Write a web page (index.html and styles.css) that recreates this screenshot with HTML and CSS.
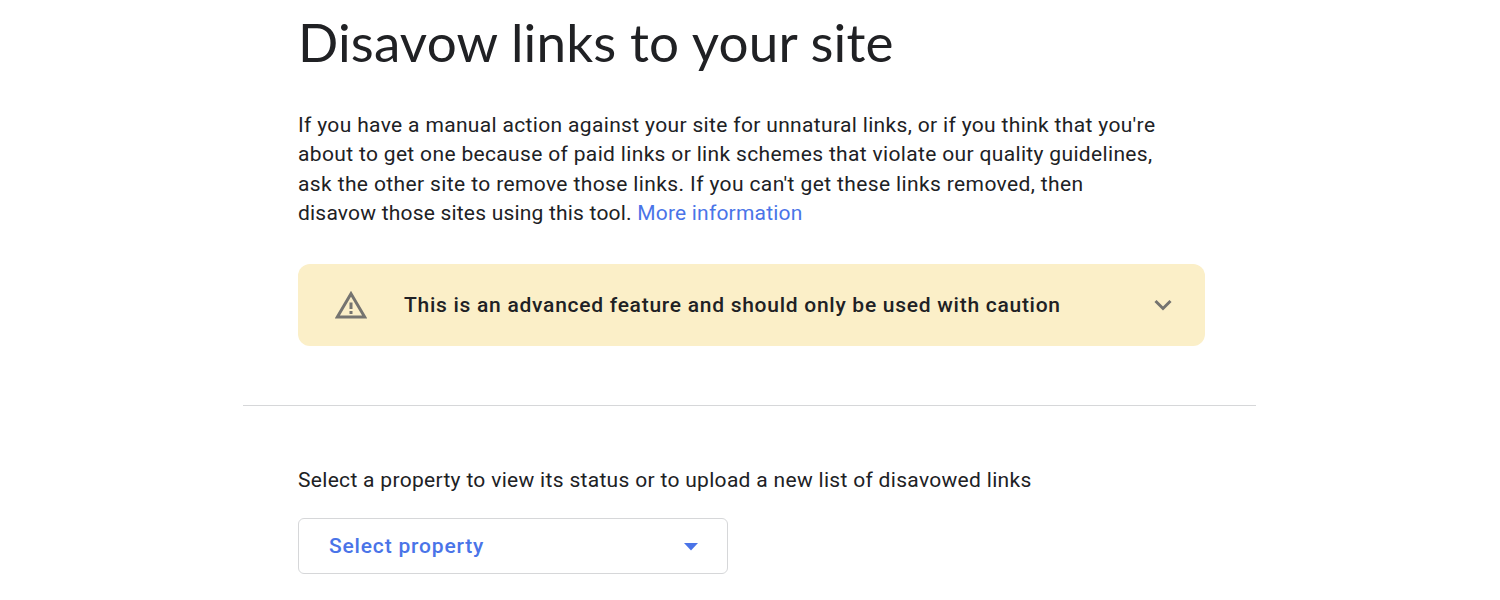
FILE: index.html
```html
<!DOCTYPE html>
<html lang="en">
<head>
  <meta charset="UTF-8" />
  <meta name="viewport" content="width=device-width, initial-scale=1">
  <title>Disavow links to your site</title>
  <link rel="stylesheet" href="styles.css">
</head>
<body>
  <main class="page">
    <section class="intro">
      <h1>Disavow links to your site</h1>
      <p class="description">
        <span class="line line-1">If you have a manual action against your site for unnatural links, or if you think that you're</span>
        <span class="line line-2">about to get one because of paid links or link schemes that violate our quality guidelines,</span>
        <span class="line line-3">ask the other site to remove those links. If you can't get these links removed, then</span>
        <span class="line line-4">disavow those sites using this tool. <a href="#">More information</a></span>
      </p>
      <div class="warning">
        <svg class="warning-icon" viewBox="0 0 32 28" width="32" height="28">
          <path d="M16 2.700 L29.700 26 H2.300 Z" fill="none" stroke="#757470" stroke-width="3" />
          <path d="M16 11.500 V18 M16 20 V23" stroke="#757470" stroke-width="3" />
        </svg>
        <span class="warning-text">This is an advanced feature and should only be used with caution</span>
        <svg class="chevron" viewBox="0 0 18 12" width="18" height="12">
          <path d="M1.500 2 L9 9.500 L16.500 2" fill="none" stroke="#757470" stroke-width="3" />
        </svg>
      </div>
    </section>
    <section class="property">
      <p class="property-label">Select a property to view its status or to upload a new list of disavowed links</p>
      <button class="select">
        <span>Select property</span>
        <svg class="arrow" viewBox="0 0 14 8" width="14" height="8">
          <path d="M0 0 H14 L7 7.500 Z" fill="#4a74e8" />
        </svg>
      </button>
    </section>
  </main>
</body>
</html>
```
FILE: styles.css
```css
* {
  box-sizing: border-box;
}
body {
  background: #fff;
  color: #202124;
  font-family: Roboto, "Open Sans", sans-serif;
  margin: 0;
}
.page {
  width: 1013px;
  margin-left: 243px;
}
.intro {
  height: 406px;
  padding: 10px 51px 0 55px;
  border-bottom: 1px solid #d6d7d9;
}
h1 {
  margin: 0;
  font-family: Lato, sans-serif;
  font-size: 53px;
  font-weight: 400;
  line-height: 64px;
  letter-spacing: 0.16px;
  white-space: nowrap;
}
.description {
  margin: 37px 0 0;
  font-size: 21px;
  line-height: 29.3px;
}
.line {
  display: block;
  white-space: nowrap;
}
.line-1,
.line-2 {
  letter-spacing: 0.34px;
}
.line-3 {
  letter-spacing: 0.38px;
}
.line-4 {
  letter-spacing: 0.2px;
}
a {
  color: #4a74e8;
  text-decoration: none;
}
.warning {
  display: flex;
  align-items: center;
  height: 82px;
  margin-top: 35.8px;
  padding: 0 33px 0 37px;
  background: #fbefc8;
  border-radius: 12px;
}
.warning-text {
  flex: 1;
  margin-left: 37px;
  font-size: 21px;
  font-weight: 500;
  letter-spacing: 0.73px;
}
.property {
  padding: 59px 55px 0;
}
.property-label {
  margin: 0;
  font-size: 21px;
  line-height: 30px;
  letter-spacing: 0.31px;
  white-space: nowrap;
}
.select {
  display: flex;
  align-items: center;
  justify-content: space-between;
  width: 430px;
  height: 56px;
  margin-top: 23px;
  padding: 0 29px 0 30px;
  background: #fff;
  border: 1px solid #d6d7d9;
  border-radius: 6px;
  color: #4a74e8;
  font-family: inherit;
  font-size: 21px;
  font-weight: 500;
  letter-spacing: 0.82px;
}
.arrow {
  margin-top: 2px;
}
```
